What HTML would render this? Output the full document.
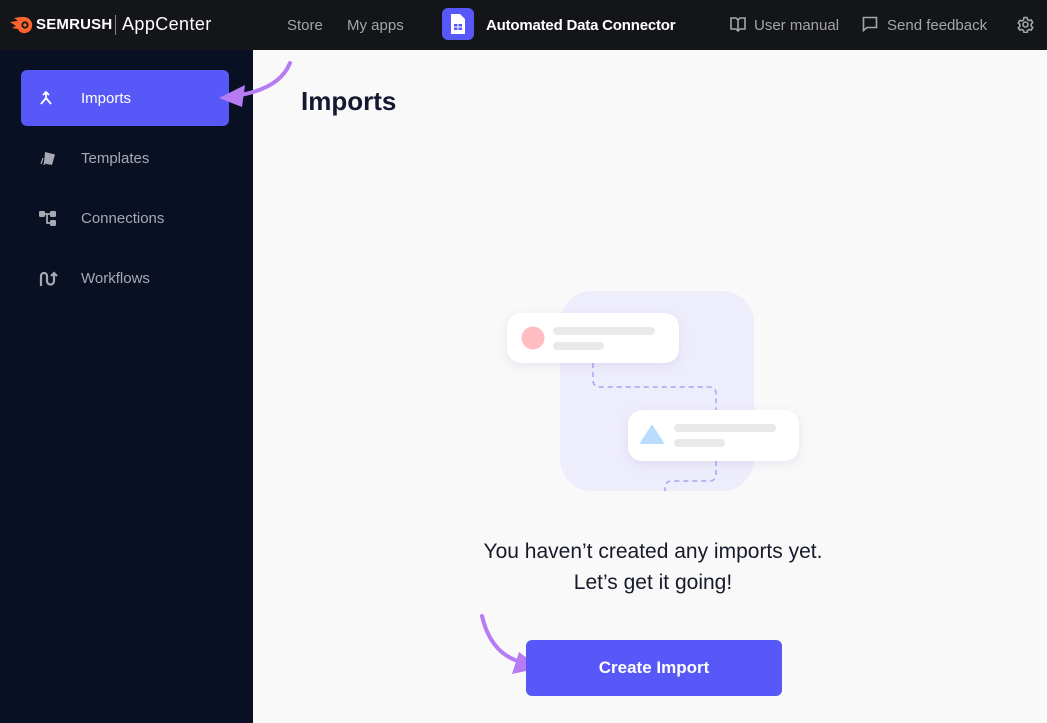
<!DOCTYPE html>
<html><head><style>
*{margin:0;padding:0;box-sizing:border-box}
body{width:1047px;height:723px;overflow:hidden;background:#f9f9f9;font-family:"Liberation Sans",sans-serif;position:relative}
.top{position:absolute;left:0;top:0;width:1047px;height:50px;background:#141518;color:#fff}
.top span{position:absolute;top:17px;font-size:15px;white-space:nowrap}
.side{position:absolute;left:0;top:50px;width:253px;height:673px;background:#0a1023}
.nav{position:absolute;left:21px;width:208px;height:56px;border-radius:6px;color:#a6a8b3;font-size:15px}
.nav span{position:absolute;left:60px;top:20px}
.nav svg{position:absolute;left:18px;top:20px}
.act{background:#5758f7;color:#fff}
.abs{position:absolute}
</style></head><body>
<div class="top">
  <svg class="abs" style="left:10px;top:15px" width="23" height="20" viewBox="0 0 23 20"><path d="M0 7 L8 6 L4 3 L11 2 Q19 1 22 8 Q23 16 16 18 Q10 19 8 14 L2 13 L6 11 Z" fill="#ff642d"/><circle cx="15" cy="10" r="3.6" fill="#141518"/><circle cx="15" cy="10" r="1.8" fill="#ff642d"/></svg>
  <span style="left:36px;top:16px;font-weight:bold;font-size:15px;letter-spacing:0.2px">SEMRUSH</span>
  <div class="abs" style="left:115px;top:15px;width:1px;height:20px;background:#888"></div>
  <span style="left:122px;top:14px;font-size:18px;letter-spacing:0.4px">AppCenter</span>
  <span style="left:287px;color:#a3a5ab;font-size:15px">Store</span>
  <span style="left:347px;color:#a3a5ab;font-size:15px">My apps</span>
  <div class="abs" style="left:442px;top:8px;width:32px;height:32px;border-radius:6px;background:#5758f7"></div>
  <svg class="abs" style="left:450px;top:13px" width="16" height="22"><path d="M1 1h9l5 5v15H1z" fill="#fff"/><rect x="4" y="11" width="8" height="6" fill="#5758f7"/><path d="M4 14h8M8 11v6" stroke="#fff" stroke-width="1"/></svg>
  <span style="left:486px;font-weight:bold;font-size:15px;letter-spacing:-0.2px">Automated Data Connector</span>
  <svg class="abs" style="left:730px;top:16px" width="16" height="16" fill="none" stroke="#a3a5ab" stroke-width="1.6"><path d="M1 2h5l2 2 2-2h5v11h-5l-2 2-2-2H1z M8 4v11"/></svg>
  <span style="left:754px;color:#a3a5ab;font-size:15px">User manual</span>
  <svg class="abs" style="left:862px;top:16px" width="16" height="16" fill="none" stroke="#a3a5ab" stroke-width="1.6"><path d="M1.5 1.5h13v10H5l-3.5 3z"/></svg>
  <span style="left:887px;color:#a3a5ab;font-size:15px">Send feedback</span>
  <svg class="abs" style="left:1017px;top:16px" width="17" height="17" viewBox="0 0 17 17" fill="none" stroke="#a3a5ab" stroke-width="1.6"><circle cx="8.5" cy="8.5" r="2.5"/><path d="M7 1.5h3l.5 2 1.7 1 2-.6 1.5 2.6-1.5 1.5v2l1.5 1.5-1.5 2.6-2-.6-1.7 1-.5 2H7l-.5-2-1.7-1-2 .6L1.3 12l1.5-1.5v-2L1.3 7l1.5-2.6 2 .6 1.7-1z"/></svg>
</div>
<div class="side">
  <div class="nav act" style="top:20px"><svg width="14" height="16" fill="none" stroke="#fff" stroke-width="1.8"><path d="M7 2v6L2 14M7 8l5 6M4 5l3-3 3 3"/></svg><span>Imports</span></div>
  <div class="nav" style="top:80px"><svg width="18" height="16"><path d="M6 2l10 2.5-3 10.5-8-1.5z" fill="#a6a8b3"/><path d="M4 8l-2 6M6 10l-1 5" stroke="#a6a8b3" stroke-width="1.2"/></svg><span>Templates</span></div>
  <div class="nav" style="top:140px"><svg width="18" height="17" fill="#a6a8b3"><rect x="0" y="1" width="6" height="6" rx="1.2"/><rect x="11" y="1" width="6" height="6" rx="1.2"/><rect x="11" y="10" width="6" height="6" rx="1.2"/><path d="M5 4h6M8 4v9h3" stroke="#a6a8b3" stroke-width="1.8" fill="none"/></svg><span>Connections</span></div>
  <div class="nav" style="top:200px"><svg width="22" height="17" fill="none" stroke="#a6a8b3" stroke-width="2.2"><path d="M2 16V6a3 3 0 0 1 6 0v5a3 3 0 0 0 7 0V3M12 6l3-3 3 3"/></svg><span>Workflows</span></div>
</div>
<div class="abs" style="left:301px;top:86px;font-size:26px;font-weight:bold;color:#151830">Imports</div>
<svg class="abs" style="left:0;top:0" width="1047" height="723">
  <defs><filter id="s" x="-20%" y="-30%" width="140%" height="170%"><feDropShadow dx="0" dy="3" stdDeviation="5" flood-color="#7a7ab0" flood-opacity="0.15"/></filter></defs>
  <rect x="560" y="291" width="194" height="200" rx="32" fill="#eeedfc"/>
  <path d="M593 363v17q0 7 7 7h109q7 0 7 7v16M716 461v13q0 7-7 7h-37q-7 0-7 7v3" fill="none" stroke="#a5a3f5" stroke-width="1.5" stroke-dasharray="5 4"/>
  <rect x="507" y="313" width="172" height="50" rx="14" fill="#fff" filter="url(#s)"/>
  <circle cx="533" cy="338" r="11.5" fill="#ffbdc2"/>
  <rect x="553" y="327" width="102" height="8" rx="4" fill="#e9e9e9"/>
  <rect x="553" y="342" width="51" height="8" rx="4" fill="#e9e9e9"/>
  <rect x="628" y="410" width="171" height="51" rx="14" fill="#fff" filter="url(#s)"/>
  <path d="M652 426l11 17h-22z" fill="#b8dcfb" stroke="#b8dcfb" stroke-linejoin="round" stroke-width="2"/>
  <rect x="674" y="424" width="102" height="8" rx="4" fill="#e9e9e9"/>
  <rect x="674" y="439" width="51" height="8" rx="4" fill="#e9e9e9"/>
  <path d="M290 63Q280 88 240 95" fill="none" stroke="#b57cf3" stroke-width="4" stroke-linecap="round"/>
  <path d="M219 98l26-13-3 22z" fill="#b57cf3"/>
  <path d="M482 616Q490 650 515 660" fill="none" stroke="#b57cf3" stroke-width="4" stroke-linecap="round"/>
  <path d="M540 668l-28 6 7-22z" fill="#b57cf3"/>
</svg>
<div class="abs" style="left:403px;top:536px;width:500px;text-align:center;font-size:21px;line-height:31px;color:#171a2a">You haven’t created any imports yet.<br>Let’s get it going!</div>
<div class="abs" style="left:526px;top:640px;width:256px;height:56px;border-radius:6px;background:#5758f7;color:#fff;font-weight:bold;font-size:17px;text-align:center;line-height:56px">Create Import</div>
</body></html>
